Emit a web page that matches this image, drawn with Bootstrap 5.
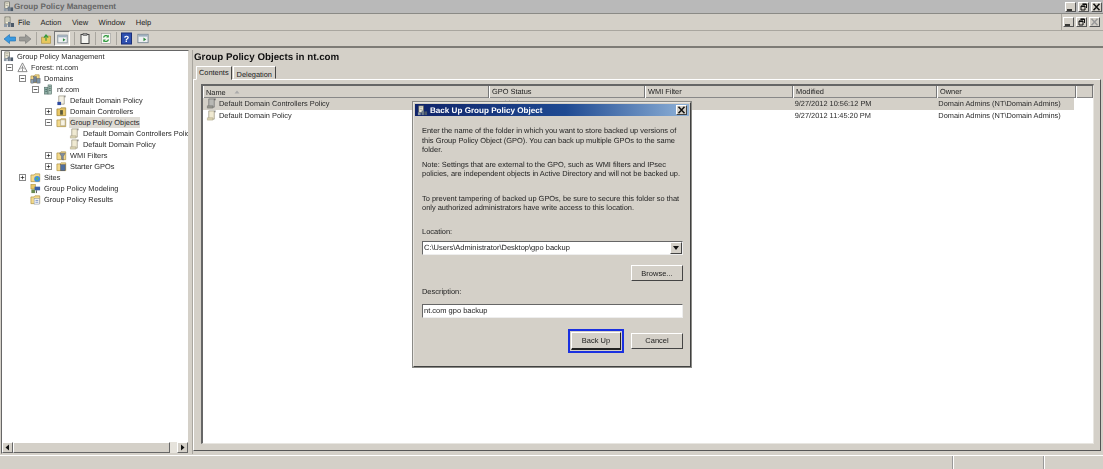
<!DOCTYPE html>
<html lang="en">
<head>
<meta charset="utf-8">
<title>Group Policy Management</title>
<link href="https://cdn.jsdelivr.net/npm/bootstrap@5.3.0/dist/css/bootstrap.min.css" rel="stylesheet">
<script src="https://cdn.jsdelivr.net/npm/bootstrap@5.3.0/dist/js/bootstrap.bundle.min.js"></script>
<style>
html,body{height:469px;width:1103px;overflow:hidden;margin:0}
body{background:#d4d0c8;font-family:"Liberation Sans",Arial,sans-serif;font-size:7.4px;line-height:11px;color:#222;position:relative;text-rendering:geometricPrecision;filter:blur(.35px)}
svg{display:block;flex:none}
.win-title{height:13px;background:#b9b9b9;color:#666;font-weight:700;font-size:8px;letter-spacing:.05px;padding-left:3px;gap:0}
.capbtn{width:11px;height:10px;background:#d4d0c8;border:1px solid;border-color:#fff #555 #555 #fff;flex:none}
.capbtn svg{width:9px;height:8px}
.caps{gap:2px;margin-left:auto;padding-right:1px}
.menu-row{height:18px;border-top:1px solid #8a8a86;border-bottom:1px solid #a9a69f;background:#d4d0c8;padding-left:3px;font-size:7.5px}
.menu-row .menu-item{margin-right:10.500px;color:#222}
.menu-row .caps{border-left:1px solid #a9a69f;height:16px;padding-left:1px;padding-right:3px}
.gpm-menu-ico{margin-right:3px}
.tool-row{height:17px;border-bottom:2px solid #7d7b76;padding-left:3px;gap:3px}
.tsep{width:1px;height:13px;background:#a9a69f;margin:0 1px}
.tool-on{background:#e6e4df;border:1px solid;border-color:#777 #fff #fff #777;height:15px;width:16px;padding:1px}
.panes{height:407px;padding:2px 0 1px 1px}
.tree-pane{width:188px;flex:none;background:#fff;border:1px solid;border-color:#666 #d4d0c8 #d4d0c8 #666;overflow:hidden}
.tree-body{flex:1 1 auto;padding:0 0 0 4px;overflow:hidden}
.tree-row{height:11px;white-space:nowrap;color:#2a2a2a}
.tree-row>span:last-child{padding:0 1px}
.tree-exp{width:7px;height:7px;border:1px solid #888;background:#fff;margin-right:4px;flex:none;position:relative}
.tree-gap{width:11px;flex:none}
.ind0{margin-left:-3px}.ind1{margin-left:0}.ind2{margin-left:13px}.ind3{margin-left:26px}.ind4{margin-left:39px}.ind5{margin-left:63px}
.tree-ico{width:11px;height:11px;margin-right:2px}
.tree-sel{background:#dedbd4}
.hbar{height:11px;background:#e6e3dc;flex:none}
.hthumb{flex:1;background:#d4d0c8;border:1px solid;border-color:#fff #666 #666 #fff}
.hbtn{width:11px;background:#d4d0c8;border:1px solid;border-color:#fff #666 #666 #fff;flex:none}
.hbtn svg{width:9px;height:9px}
.hgap{width:7px;flex:none}
.right-pane{flex:1 1 auto;border-left:1px solid #a9a69f;margin-left:3px;padding:0 2px 3px 0;border-right:0}
.pane-h{font-weight:700;font-size:9.75px;line-height:12px;color:#111;padding:2px 0 0 1px;height:16px;letter-spacing:0}
.win-tabs{height:13px;padding-left:3px;gap:1px;margin-bottom:0;position:relative;z-index:1}
.win-tab{border:1px solid;border-color:#fff #444 transparent #fff;padding:2px 3px 0;color:#222;height:13px;background:#d4d0c8}
.win-tab.is-on{height:14px;padding:0 2px}
.tab-frame{flex:1 1 auto;min-height:0;border:1px solid;border-color:#fff #555 #555 #fff;padding:4px 6px 6px 7px}
.list-frame{height:100%;background:#fff;border:1px solid;border-color:#666 #e8e6e1 #e8e6e1 #666;border-left-width:2px;border-top-width:2px}
.list-head{height:12px;background:#d4d0c8;border-bottom:1px solid #888;flex:none}
.lh{border-right:1px solid #777;border-left:1px solid #fff;padding-left:2px;white-space:nowrap;color:#222;height:12px}
.c1{width:286px}.c2{width:156px}.c3{width:148px}.c4{width:144px}.c5{width:139px}.c6{flex:1}
.list-row{height:11.500px;white-space:nowrap;color:#2a2a2a;width:871px}
.list-row.is-sel{background:#d4d0c8}
.lc{padding-left:3px;overflow:hidden}
.status-row{height:14px;border-top:1px solid #fff;flex:none}
.st1{flex:1;border-right:1px solid #999}
.st2{width:91px;border-left:1px solid #fff;border-right:1px solid #999}
.st3{width:59px;border-left:1px solid #fff}
.dlg{position:absolute;left:413px;top:102px;width:278px;height:265px;background:#d4d0c8;border:1px solid;border-color:#e8e6e1 #404040 #404040 #e8e6e1;outline:1px solid #8a8a86;padding:1px}
.dlg-title{height:12px;background:linear-gradient(90deg,#10246a,#1f4a92 55%,#8fb2d8);color:#fff;font-weight:700;font-size:8.100px;padding:0 2px;gap:2px;margin-bottom:10px}
.dlg-x{width:11px;height:10px;background:#d4d0c8;border:1px solid;border-color:#fff #444 #444 #fff;margin-left:auto}
.dlg-x svg{width:9px;height:8px}
.dlg-body{padding:0 6px 0 7px;font-size:7.450px;line-height:9.500px;color:#222}
.dlg-p{margin:0}
.dlg-inp{height:14px;background:#fff;border:1px solid;border-color:#666 #eee #eee #666;padding-left:1px;line-height:12px;color:#222;font-size:7.500px}
.combo-btn{width:12px;height:12px;margin-left:auto;background:#d4d0c8;border:1px solid;border-color:#fff #444 #444 #fff}
.win-btn{width:52px;height:16px;background:#d4d0c8;border:1px solid;border-color:#fff #444 #444 #fff;color:#222;font-size:7.500px;line-height:13px;text-align:center;padding:0}
.focus-wrap{border:2px solid #1a30e0;padding:1px;background:#d4d0c8}
.focus-wrap .win-btn{width:50px;height:18px;border-width:1px 1px 2px 1px;border-color:#fff #222 #222 #fff;line-height:15px}
.mt-note{margin-top:5px}.mt-prevent{margin-top:15px}.mt-loc{margin-top:14px}.mt-combo{margin-top:5px}.mt-browse{margin-top:10px}.mt-desc{margin-top:6px}.mt-inp{margin-top:7px}.mt-act{margin-top:11px;gap:7px}
</style>
</head>
<body>
<svg width="0" height="0" class="position-absolute">
<defs>
<symbol id="i-gpm" viewBox="0 0 12 12"><rect x="2" y="1" width="5" height="7" fill="#f2eeda" stroke="#6a6a60" stroke-width=".8"/><path d="M3 3h3M3 5h3" stroke="#8a8a80" stroke-width=".7"/><rect x="5" y="6" width="2.500" height="5" fill="#6f7d8c"/><rect x="8" y="7" width="3" height="4" fill="#4c5a6a"/><rect x="1" y="8" width="3" height="3" fill="#8d99a5"/></symbol>
<symbol id="i-domains" viewBox="0 0 12 12"><path d="M1 3.200h3.400l1-1.200H10v8.500H1z" fill="#f3d98c" stroke="#a68a3c" stroke-width=".7"/><rect x="4" y="4" width="3" height="6" fill="#6e8297" stroke="#445" stroke-width=".4"/><rect x="7.500" y="6" width="3.500" height="5" fill="#7f97a8" stroke="#445" stroke-width=".4"/><rect x="1" y="7" width="3" height="4" fill="#8fa5b5" stroke="#445" stroke-width=".4"/></symbol>
<symbol id="i-forest" viewBox="0 0 12 12"><path d="M6 1 1 10.500h10z" fill="#fff" stroke="#777" stroke-width=".9"/><path d="M6 4v6M3.500 8 6 5.500 8.500 8" stroke="#777" stroke-width=".8" fill="none"/></symbol>
<symbol id="i-dom" viewBox="0 0 12 12"><rect x="1.500" y="3.500" width="4" height="7.500" fill="#8fb0a8" stroke="#4d6660" stroke-width=".6"/><rect x="5.500" y="1" width="4" height="10" fill="#a8c2b8" stroke="#4d6660" stroke-width=".6"/><path d="M6.500 3h2M6.500 5h2M6.500 7h2M2.500 6h2M2.500 8h2" stroke="#33504a" stroke-width=".7"/></symbol>
<symbol id="i-doc" viewBox="0 0 12 12"><path d="M3 1h6v9H3z" fill="#f0ead2" stroke="#8c8670" stroke-width=".7"/><path d="M1.500 8.500h6V11h-6z" fill="#ddd5b4" stroke="#a09878" stroke-width=".5"/><path d="M9.800 .5v2" stroke="#555" stroke-width=".9"/></symbol>
<symbol id="i-docg" viewBox="0 0 12 12"><path d="M3 1h6v9H3z" fill="#b8b8b4" stroke="#666" stroke-width=".7"/><path d="M1.500 8.500h6V11h-6z" fill="#99998f" stroke="#666" stroke-width=".5"/><path d="M9.800 .5v2" stroke="#333" stroke-width=".9"/></symbol>
<symbol id="i-ddp" viewBox="0 0 12 12"><path d="M3 1h6v9H3z" fill="#f4f1e4" stroke="#8c8670" stroke-width=".7"/><rect x="1.500" y="7.500" width="4" height="3.500" fill="#2d4aa0"/><path d="M9.800 .5v2" stroke="#555" stroke-width=".9"/></symbol>
<symbol id="i-dc" viewBox="0 0 12 12"><path d="M1 3.200h3.400l1-1.200H10.600v8.500H1z" fill="#e9c766" stroke="#957a2e" stroke-width=".7"/><rect x="4.500" y="4.500" width="3" height="5" fill="#5a5a3c"/></symbol>
<symbol id="i-gpo" viewBox="0 0 12 12"><path d="M1 3.200h3.400l1-1.200H10.600v8.500H1z" fill="#f3d98c" stroke="#a68a3c" stroke-width=".7"/><path d="M5 3h5v6.500H5z" fill="#f7f3e3" stroke="#8c8670" stroke-width=".5"/></symbol>
<symbol id="i-wmi" viewBox="0 0 12 12"><path d="M1 3.200h3.400l1-1.200H10.600v8.500H1z" fill="#f3d98c" stroke="#a68a3c" stroke-width=".7"/><path d="M4 3.500h6L8 7v4l-2-1V7z" fill="#7f8ea0" stroke="#445" stroke-width=".4"/></symbol>
<symbol id="i-start" viewBox="0 0 12 12"><path d="M1 3.200h3.400l1-1.200H10.600v8.500H1z" fill="#f3d98c" stroke="#a68a3c" stroke-width=".7"/><rect x="5" y="4" width="5" height="6.500" fill="#4f6f9f" stroke="#334" stroke-width=".4"/></symbol>
<symbol id="i-sites" viewBox="0 0 12 12"><path d="M1 3.200h3.400l1-1.200H10.600v8.500H1z" fill="#f3d98c" stroke="#a68a3c" stroke-width=".7"/><circle cx="7.800" cy="7.500" r="3.200" fill="#3f8fe0"/><path d="M6.500 6.500l2-.8.600 1.800-1.500 1.500z" fill="#5cb85c"/></symbol>
<symbol id="i-model" viewBox="0 0 12 12"><rect x="1" y="1.500" width="5" height="5" fill="#e9c766" stroke="#957a2e" stroke-width=".5"/><rect x="5" y="4" width="6" height="4" fill="#3b5fa8"/><rect x="1.500" y="7" width="4" height="4" fill="#6a8a50"/><path d="M7 8v3" stroke="#444"/></symbol>
<symbol id="i-results" viewBox="0 0 12 12"><path d="M1 3.200h3.400l1-1.200H10.600v8.500H1z" fill="#f3d98c" stroke="#a68a3c" stroke-width=".7"/><rect x="4.500" y="5" width="6" height="6" fill="#f5f5f5" stroke="#7a8aa0" stroke-width=".5"/><path d="M6 7h3M6 9h3" stroke="#4a6ab0" stroke-width=".7"/></symbol>
<symbol id="i-min" viewBox="0 0 9 8"><path d="M1 7h5" stroke="#111" stroke-width="1.600"/></symbol>
<symbol id="i-rest" viewBox="0 0 9 8"><path d="M3.500 1h4v4M2 3h4v4H2z" fill="none" stroke="#111" stroke-width="1"/><path d="M3.500 1.300h4M2 3.300h4" stroke="#111" stroke-width="1.300"/></symbol>
<symbol id="i-close" viewBox="0 0 9 8"><path d="M1.500 .8 7.500 7.200M7.500 .8 1.500 7.200" stroke="#111" stroke-width="1.500"/></symbol>
<symbol id="i-closeg" viewBox="0 0 9 8"><path d="M1.500 .8 7.500 7.200M7.500 .8 1.500 7.200" stroke="#999" stroke-width="1.500"/></symbol>
<symbol id="i-plus" viewBox="0 0 7 7"><path d="M1 3.500h5M3.500 1v5" stroke="#222" stroke-width="1"/></symbol>
<symbol id="i-minus" viewBox="0 0 7 7"><path d="M1 3.500h5" stroke="#222" stroke-width="1"/></symbol>
<symbol id="i-console" viewBox="0 0 14 14"><rect x="1.500" y="2.500" width="11" height="9" fill="#eef0f2" stroke="#7a8894"/><rect x="2" y="3" width="10" height="2" fill="#9fb0c0"/><path d="M7.500 6v4l3-2z" fill="#2e8b3d"/></symbol>
</defs>
</svg>

<div class="win-title d-flex align-items-center">
  <svg width="11" height="11"><use href="#i-gpm"/></svg>
  <span>Group Policy Management</span>
  <div class="caps d-flex">
    <div class="capbtn"><svg><use href="#i-min"/></svg></div>
    <div class="capbtn"><svg><use href="#i-rest"/></svg></div>
    <div class="capbtn"><svg><use href="#i-close"/></svg></div>
  </div>
</div>

<div class="menu-row d-flex align-items-center">
  <svg width="12" height="12" class="gpm-menu-ico"><use href="#i-gpm"/></svg>
  <span class="menu-item">File</span><span class="menu-item">Action</span><span class="menu-item">View</span><span class="menu-item">Window</span><span class="menu-item">Help</span>
  <div class="caps d-flex align-items-center">
    <div class="capbtn"><svg><use href="#i-min"/></svg></div>
    <div class="capbtn"><svg><use href="#i-rest"/></svg></div>
    <div class="capbtn"><svg><use href="#i-closeg"/></svg></div>
  </div>
</div>

<div class="tool-row d-flex align-items-center">
  <svg width="13" height="12" viewBox="0 0 13 12"><path d="M1 6 6.500 1.500V4H12.500V8H6.500V10.500z" fill="#3b9ae0" stroke="#1b6cb0" stroke-width=".6"/></svg>
  <svg width="13" height="12" viewBox="0 0 13 12"><path d="M12 6 6.500 1.500V4H.5V8H6.500V10.500z" fill="#9a9a96" stroke="#777" stroke-width=".6"/></svg>
  <div class="tsep"></div>
  <svg width="10" height="12" viewBox="0 0 11 12"><path d="M.5 4h3.400l1-1.200H10.500v8H.5z" fill="#e8c85e" stroke="#a68a3c" stroke-width=".7"/><path d="M5.500 8V3M3.300 4.500 5.500 1.500l2.400 3" stroke="#2f9a3c" stroke-width="1.200" fill="none"/></svg>
  <div class="tool-on"><svg width="13" height="12"><use href="#i-console"/></svg></div>
  <div class="tsep"></div>
  <svg width="12" height="13" viewBox="0 0 12 12"><rect x="2" y="2" width="8" height="9" fill="#f4f4f0" stroke="#444"/><rect x="4" y="1" width="4" height="2" fill="#999" stroke="#444" stroke-width=".5"/></svg>
  <div class="tsep"></div>
  <svg width="12" height="13" viewBox="0 0 12 12"><rect x="1.500" y="1" width="9" height="10" fill="#f6f6f2" stroke="#999" stroke-width=".6"/><path d="M3.500 5A2.800 2.800 0 0 1 8 3.800M8.500 7A2.800 2.800 0 0 1 4 8.200" stroke="#2f9a3c" stroke-width="1.200" fill="none"/><path d="M8.800 2.200V5H6.200zM3.200 9.800V7H5.800z" fill="#2f9a3c"/></svg>
  <div class="tsep"></div>
  <svg width="12" height="13" viewBox="0 0 12 12"><rect x=".5" y=".5" width="10" height="11" fill="#2d4fb0" stroke="#1b2f78"/><text x="5.500" y="9.500" font-size="9" font-weight="700" text-anchor="middle" fill="#fff" font-family="Liberation Sans">?</text></svg>
  <svg width="14" height="13"><use href="#i-console"/></svg>
</div>

<div class="panes d-flex">
  <div class="tree-pane d-flex flex-column">
    <div class="tree-body">
      <div class="tree-row d-flex align-items-center ind0"><svg class="tree-ico"><use href="#i-gpm"/></svg><span>Group Policy Management</span></div>
      <div class="tree-row d-flex align-items-center ind1"><div class="tree-exp"><svg width="5" height="5"><use href="#i-minus"/></svg></div><svg class="tree-ico"><use href="#i-forest"/></svg><span>Forest: nt.com</span></div>
      <div class="tree-row d-flex align-items-center ind2"><div class="tree-exp"><svg width="5" height="5"><use href="#i-minus"/></svg></div><svg class="tree-ico"><use href="#i-domains"/></svg><span>Domains</span></div>
      <div class="tree-row d-flex align-items-center ind3"><div class="tree-exp"><svg width="5" height="5"><use href="#i-minus"/></svg></div><svg class="tree-ico"><use href="#i-dom"/></svg><span>nt.com</span></div>
      <div class="tree-row d-flex align-items-center ind4"><div class="tree-gap"></div><svg class="tree-ico"><use href="#i-ddp"/></svg><span>Default Domain Policy</span></div>
      <div class="tree-row d-flex align-items-center ind4"><div class="tree-exp"><svg width="5" height="5"><use href="#i-plus"/></svg></div><svg class="tree-ico"><use href="#i-dc"/></svg><span>Domain Controllers</span></div>
      <div class="tree-row d-flex align-items-center ind4"><div class="tree-exp"><svg width="5" height="5"><use href="#i-minus"/></svg></div><svg class="tree-ico"><use href="#i-gpo"/></svg><span class="tree-sel">Group Policy Objects</span></div>
      <div class="tree-row d-flex align-items-center ind5"><svg class="tree-ico"><use href="#i-doc"/></svg><span>Default Domain Controllers Polic</span></div>
      <div class="tree-row d-flex align-items-center ind5"><svg class="tree-ico"><use href="#i-doc"/></svg><span>Default Domain Policy</span></div>
      <div class="tree-row d-flex align-items-center ind4"><div class="tree-exp"><svg width="5" height="5"><use href="#i-plus"/></svg></div><svg class="tree-ico"><use href="#i-wmi"/></svg><span>WMI Filters</span></div>
      <div class="tree-row d-flex align-items-center ind4"><div class="tree-exp"><svg width="5" height="5"><use href="#i-plus"/></svg></div><svg class="tree-ico"><use href="#i-start"/></svg><span>Starter GPOs</span></div>
      <div class="tree-row d-flex align-items-center ind2"><div class="tree-exp"><svg width="5" height="5"><use href="#i-plus"/></svg></div><svg class="tree-ico"><use href="#i-sites"/></svg><span>Sites</span></div>
      <div class="tree-row d-flex align-items-center ind2"><div class="tree-gap"></div><svg class="tree-ico"><use href="#i-model"/></svg><span>Group Policy Modeling</span></div>
      <div class="tree-row d-flex align-items-center ind2"><div class="tree-gap"></div><svg class="tree-ico"><use href="#i-results"/></svg><span>Group Policy Results</span></div>
    </div>
    <div class="hbar d-flex">
      <div class="hbtn"><svg viewBox="0 0 9 9"><path d="M6 1.500v6L2.500 4.500z" fill="#111"/></svg></div>
      <div class="hthumb"></div>
      <div class="hgap"></div>
      <div class="hbtn"><svg viewBox="0 0 9 9"><path d="M3 1.500v6l3.500-3z" fill="#111"/></svg></div>
    </div>
  </div>

  <div class="right-pane d-flex flex-column">
    <div class="pane-h">Group Policy Objects in nt.com</div>
    <div class="win-tabs d-flex">
      <div class="win-tab is-on">Contents</div>
      <div class="win-tab">Delegation</div>
    </div>
    <div class="tab-frame">
      <div class="list-frame d-flex flex-column">
        <div class="list-head d-flex">
          <div class="lh c1 d-flex align-items-center">Name<svg class="ms-2" width="6" height="4" viewBox="0 0 6 4"><path d="M3 .5 5.500 3.500H.5z" fill="#aaa"/></svg></div>
          <div class="lh c2">GPO Status</div>
          <div class="lh c3">WMI Filter</div>
          <div class="lh c4">Modified</div>
          <div class="lh c5">Owner</div>
          <div class="lh c6"></div>
        </div>
        <div class="list-row is-sel d-flex align-items-center">
          <div class="lc c1 d-flex align-items-center"><svg class="tree-ico"><use href="#i-docg"/></svg>Default Domain Controllers Policy</div>
          <div class="lc c2">Enabled</div><div class="lc c3">None</div><div class="lc c4">9/27/2012 10:56:12 PM</div><div class="lc c5">Domain Admins (NT\Domain Admins)</div>
        </div>
        <div class="list-row d-flex align-items-center">
          <div class="lc c1 d-flex align-items-center"><svg class="tree-ico"><use href="#i-doc"/></svg>Default Domain Policy</div>
          <div class="lc c2">Enabled</div><div class="lc c3">None</div><div class="lc c4">9/27/2012 11:45:20 PM</div><div class="lc c5">Domain Admins (NT\Domain Admins)</div>
        </div>
      </div>
    </div>
  </div>
</div>

<div class="status-row d-flex">
  <div class="st1"></div><div class="st2"></div><div class="st3"></div>
</div>

<div class="dlg">
  <div class="dlg-title d-flex align-items-center">
    <svg width="11" height="11"><use href="#i-gpm"/></svg>
    <span>Back Up Group Policy Object</span>
    <div class="dlg-x"><svg><use href="#i-close"/></svg></div>
  </div>
  <div class="dlg-body">
    <p class="dlg-p">Enter the name of the folder in which you want to store backed up versions of this Group Policy Object (GPO). You can back up multiple GPOs to the same folder.</p>
    <p class="dlg-p mt-note">Note: Settings that are external to the GPO, such as WMI filters and IPsec policies, are independent objects in Active Directory and will not be backed up.</p>
    <p class="dlg-p mt-prevent">To prevent tampering of backed up GPOs, be sure to secure this folder so that only authorized administrators have write access to this location.</p>
    <p class="dlg-p mt-loc">Location:</p>
    <div class="dlg-inp d-flex align-items-center mt-combo">C:\Users\Administrator\Desktop\gpo backup<div class="combo-btn d-flex align-items-center justify-content-center"><svg width="6" height="4" viewBox="0 0 6 4"><path d="M0 0h6L3 4z" fill="#111"/></svg></div></div>
    <div class="d-flex justify-content-end mt-browse"><button class="win-btn" type="button">Browse...</button></div>
    <p class="dlg-p mt-desc">Description:</p>
    <div class="dlg-inp mt-inp">nt.com gpo backup</div>
    <div class="d-flex justify-content-end align-items-center mt-act">
      <div class="focus-wrap"><button class="win-btn d-block" type="button">Back Up</button></div>
      <button class="win-btn" type="button">Cancel</button>
    </div>
  </div>
</div>
</body>
</html>
